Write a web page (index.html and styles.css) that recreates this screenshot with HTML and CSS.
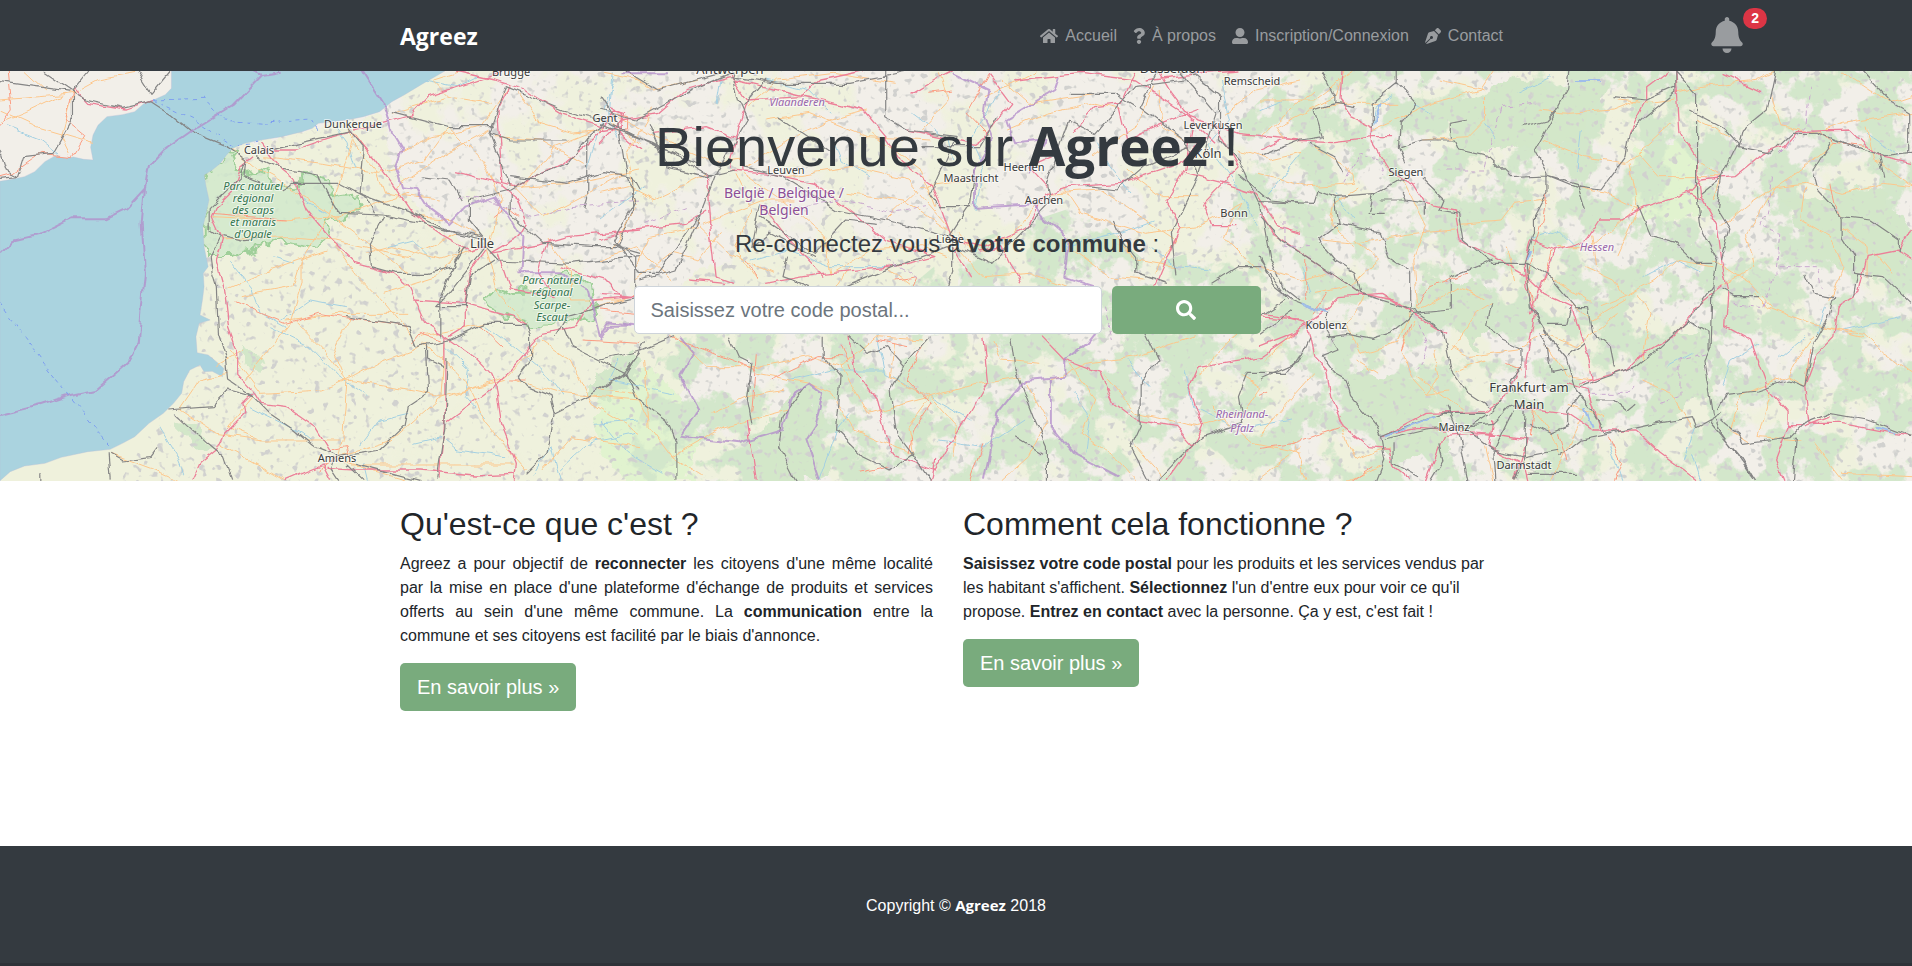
FILE: index.html
```html
<!DOCTYPE html>
<html lang="fr">
<head>
<meta charset="utf-8">
<meta name="viewport" content="width=device-width, initial-scale=1">
<title>Agreez</title>
<link rel="stylesheet" href="styles.css">
</head>
<body>
<header class="topbar">
  <nav class="container topbar-inner">
    <a class="brand" href="#">Agreez</a>
    <ul class="nav-links">
      <li><a href="#"><svg class="icon" width="18" height="16" viewBox="0 0 576 512"><path d="M280.37 148.26L96 300.11V464a16 16 0 0 0 16 16l112.06-.29a16 16 0 0 0 15.92-16V368a16 16 0 0 1 16-16h64a16 16 0 0 1 16 16v95.64a16 16 0 0 0 16 16.05L464 480a16 16 0 0 0 16-16V300L295.67 148.26a12.19 12.19 0 0 0-15.3 0zM571.6 251.47L488 182.56V44.05a12 12 0 0 0-12-12h-56a12 12 0 0 0-12 12v72.61L318.47 43a48 48 0 0 0-61 0L4.34 251.47a12 12 0 0 0-1.6 16.9l25.5 31A12 12 0 0 0 45.15 301l235.22-193.74a12.19 12.19 0 0 1 15.3 0L530.9 301a12 12 0 0 0 16.9-1.6l25.5-31a12 12 0 0 0-1.7-16.93z"/></svg>Accueil</a></li>
      <li><a href="#"><svg class="icon" width="12" height="16" viewBox="0 0 384 512"><path d="M202.021 0C122.202 0 70.503 32.703 29.914 91.026c-7.363 10.58-5.093 25.086 5.178 32.874l43.138 32.709c10.373 7.865 25.132 6.026 33.253-4.148 25.049-31.381 43.63-49.449 82.757-49.449 30.764 0 68.816 19.799 68.816 49.631 0 22.552-18.617 34.134-48.993 51.164-35.423 19.86-82.299 44.576-82.299 106.405V320c0 13.255 10.745 24 24 24h72.471c13.255 0 24-10.745 24-24v-5.773c0-42.86 125.268-44.645 125.268-160.627C377.504 66.256 286.902 0 202.021 0zM192 373.459c-38.196 0-69.271 31.075-69.271 69.271 0 38.195 31.075 69.27 69.271 69.27s69.271-31.075 69.271-69.271-31.075-69.27-69.271-69.27z"/></svg>À propos</a></li>
      <li><a href="#"><svg class="icon" width="16" height="16" viewBox="-32 0 512 512"><path d="M224 288c79.500 0 144-64.500 144-144S303.500 0 224 0 80 64.500 80 144s64.500 144 144 144zm128 32h-55.100c-22.200 10.200-46.900 16-72.900 16s-50.600-5.800-72.900-16H96c-70.700 0-128 57.300-128 128v16c0 26.500 21.500 48 48 48h416c26.500 0 48-21.500 48-48v-16c0-70.700-57.300-128-128-128z"/></svg>Inscription/Connexion</a></li>
      <li><a href="#"><svg class="icon" width="16" height="16" viewBox="0 0 512 512"><path d="M136.6 138.79a64.003 64.003 0 0 0-43.31 41.35L0 460l14.69 14.69L164.8 324.58c-2.99-6.26-4.8-13.18-4.8-20.58 0-26.51 21.49-48 48-48s48 21.49 48 48-21.49 48-48 48c-7.4 0-14.32-1.81-20.58-4.8L37.31 497.31 52 512l279.86-93.29a64.003 64.003 0 0 0 41.35-43.31L416 224 288 96l-151.4 42.79zm361.34-64.62l-60.11-60.11c-18.75-18.75-49.16-18.75-67.91 0l-56.55 56.55 128.02 128.02 56.55-56.55c18.75-18.75 18.75-49.15 0-67.91z"/></svg>Contact</a></li>
    </ul>
  </nav>
  <button class="bell" type="button" aria-label="Notifications">
    <svg class="icon" width="32" height="36" viewBox="0 0 448 512"><path d="M224 512c35.32 0 63.97-28.65 63.97-64H160.03c0 35.35 28.65 64 63.97 64zm215.39-149.71c-19.32-20.76-55.47-51.99-55.47-154.29 0-77.7-54.48-139.9-127.94-155.16V32c0-17.67-14.32-32-31.98-32s-31.98 14.33-31.98 32v20.84C118.56 68.1 64.08 130.3 64.08 208c0 102.3-36.15 133.53-55.47 154.29-6 6.45-8.66 14.16-8.61 21.71.11 16.4 12.98 32 32.1 32h383.8c19.12 0 32-15.6 32.1-32 .05-7.55-2.61-15.27-8.61-21.71z"/></svg>
    <span class="badge">2</span>
  </button>
</header>

<main>
<section class="hero">
<svg class="map" viewBox="0 71 1912 410" preserveAspectRatio="xMidYMid slice" aria-hidden="true">
  <defs>
    <filter id="woods" x="0" y="0" width="100%" height="100%" color-interpolation-filters="sRGB">
      <feTurbulence type="fractalNoise" baseFrequency="0.03" numOctaves="5" seed="8" result="n"/>
      <feColorMatrix in="n" values="0 0 0 0 .828  0 0 0 0 .905  0 0 0 0 .795  14 0 0 0 -6.5"/>
      <feComposite in2="SourceGraphic" operator="in"/>
    </filter>
    <filter id="fields" x="0" y="0" width="100%" height="100%" color-interpolation-filters="sRGB">
      <feTurbulence type="fractalNoise" baseFrequency="0.014" numOctaves="5" seed="21" result="n"/>
      <feColorMatrix in="n" values="0 0 0 0 .937  0 0 0 0 .945  0 0 0 0 .865  0 12 0 0 -5.9"/>
      <feComposite in2="SourceGraphic" operator="in"/>
    </filter>
    <filter id="towns" x="0" y="0" width="100%" height="100%" color-interpolation-filters="sRGB">
      <feTurbulence type="fractalNoise" baseFrequency="0.14" numOctaves="2" seed="4" result="n"/>
      <feColorMatrix in="n" values="0 0 0 0 .82  0 0 0 0 .82  0 0 0 0 .81  0 0 9 0 -5.6"/>
      <feComposite in2="SourceGraphic" operator="in"/>
    </filter>
    <filter id="wiggle" x="0" y="0" width="100%" height="100%" color-interpolation-filters="sRGB">
      <feTurbulence type="fractalNoise" baseFrequency="0.06" numOctaves="2" seed="3" result="n"/>
      <feDisplacementMap in="SourceGraphic" in2="n" scale="8" xChannelSelector="R" yChannelSelector="G"/>
    </filter>
    <filter id="rough" x="-10%" y="-10%" width="120%" height="120%" color-interpolation-filters="sRGB">
      <feTurbulence type="fractalNoise" baseFrequency="0.06" numOctaves="3" seed="5" result="n"/>
      <feDisplacementMap in="SourceGraphic" in2="n" scale="22" xChannelSelector="R" yChannelSelector="G"/>
    </filter>
  </defs>
  <rect y="71" width="1912" height="410" fill="#f2efe9"/>
  <path fill="#eff1dc" filter="url(#rough)" d="M205 150L262 140 380 115 400 190 450 235 520 270 560 320 640 325 700 270 860 240 960 250 960 300 760 330 700 340 680 400 640 500H-20V440L180 340Z"/>
  <g filter="url(#fields)"><rect x="380" y="71" width="1532" height="410"/></g>
  <path fill="#e1f3cf" filter="url(#rough)" d="M600 390L650 365 700 420 690 481 620 481 590 430ZM1630 150L1700 140 1700 215 1640 225Z"/>
  <g filter="url(#woods)"><path d="M660 350L760 300 870 320 960 245 1080 205 1150 265 1230 240 1240 120 1290 71H1912V481H620Z"/></g>
  <path fill="#d3e7c9" filter="url(#rough)" d="M236 350l22 2 6 18-18-2zM592 375l40-26 8 30-30 16-18 6zM178 420l22 8 14 22-14 2-20-20zM1440 110l80-36 40 20-30 50-70 10zM1420 270l70 20-10 60-46-40zM1780 200l100-10 40 50-20 40-80-20zM1340 370l90 10 20 70-60 10zM1640 350l60-20 10 60-50 30zM750 440l60-60 20 90-60 30zM1530 150l20-60 60-10-30 60z"/>
  <g filter="url(#towns)"><path d="M205 150L400 100 470 71H1912V481H120L190 370Z"/></g>
  <path filter="url(#rough)" fill="#cfe8ca" fill-opacity=".8" stroke="#9fcf99" stroke-width="2" d="M205 174L235 150 240 172 262 168 274 172 272 190 296 186 312 170 328 182 330 196 358 192 352 212 332 220 318 244 308 248 274 240 252 250 236 255H206ZM484 300L510 291 545 290 568 273 590 284 596 312 566 325 534 326 510 318 490 308Z"/>
  <g transform="matrix(.40816 0 0 .33333 0 60)">
    <path fill="#aad3df" stroke="#b9bdd6" stroke-width="1" d="M420 33V85L405 104 380 118 355 128 330 155 300 164 262 170 240 196 228 225 222 262 228 300 205 298 180 291 160 295 135 288 110 305 85 335 60 350 30 358 0 364V1262L25 1235 60 1218 110 1210 150 1192 215 1175 270 1168 300 1150 330 1130 365 1090 400 1060 425 1030 445 1000 450 965 465 930 490 915 500 935 520 934 545 950 548 925 530 905 510 885 483 878 480 830 488 790 515 780 490 765 496 720 500 680 498 640 510 620 500 560 497 500 503 470 512 420 505 380 500 345 520 330 540 310 555 285 570 265 600 250 640 240 690 230 740 215 765 205 780 190 850 180 890 170 930 155 960 125 990 105 1040 68 1090 33Z"/>
  </g>
  <g class="lines" fill="none" filter="url(#wiggle)">
    <!-- west -->
    <g transform="matrix(.40816 0 0 .33333 0 60)">
      <path class="river" d="M560 600L620 690 640 760 700 800M690 780L760 720 850 740M660 800L760 860 830 950 900 1010M1090 860L1150 930 1140 1010 1190 1080M1190 800L1260 860 1330 930 1380 1010M610 1040L740 1120 760 1140M880 1160L930 1080 1000 1060M1010 1150L1080 1130 1120 1170 1240 1190M1370 1230L1440 1150 1560 1120M390 1100L430 1180 450 1240M670 590L720 610M820 200L850 250 870 330M1040 60L1120 80 1170 50M890 1210L900 1262M1500 40L1490 160 1460 230 1440 330M950 560L1010 540 1060 600M20 200L100 240 150 290M1450 1090L1568 1080M740 420L800 460M1310 1240L1350 1160 1370 1262"/>
      <path class="road" d="M0 120L100 110 180 100 240 60 330 40M180 100L150 230 170 280M0 190L60 160 180 90M60 33L110 90M570 265L620 320 680 360 830 480 1000 640M650 290L790 310 930 340 1040 300 1100 200M850 200L870 260 920 330 940 400 1080 420M870 220L840 330 810 460 740 600 740 670 710 790 600 960M520 470L690 480 830 470 1000 400M540 540L700 530 820 540 1000 590 1120 520M550 690L640 640 800 570M590 710L720 680 740 600M700 780L830 760 1000 760M810 540L870 640 950 740 1010 830M860 770L820 870 850 960 840 1130 830 1190M560 870L640 1000 790 990 850 960M850 960L940 900 1050 850M850 960L1000 990 1080 1010 1240 960M620 1010L560 1100 640 1140 830 1140M440 1050L530 1120 640 1140M270 1180L380 1230 440 1262M440 1050L490 960 560 940M830 1190L960 1140 1080 1010 1090 850M860 1215H1260M1100 1010L1240 950 1320 850M1260 960L1370 1000 1568 1020M1330 840L1400 900 1450 1030 1568 1120M1200 540L1230 420 1180 300 1100 200M1100 110L1060 60 1130 33M960 160L1100 110 1200 130M970 380L1080 290 1200 210M1250 80L1180 200 1060 230 980 280M1250 380L1400 370 1568 330M1260 380L1330 470 1440 400 1530 340M1340 540L1400 640 1400 720 1530 720M1480 200L1360 260 1280 380M1490 180L1568 250M1420 760L1568 700M1190 540L1110 480 1030 470M1180 560L1080 600 960 560 900 580M1190 560L1220 700 1290 790M1030 830L1190 790M940 700L1070 650 1140 560M1040 850L1140 960 1190 1090 1290 1230M1330 1230L1400 1130 1568 1160M0 150L90 200 230 250M540 1150L700 1262M830 1200L1000 1262M1480 40L1568 60M1270 100L1320 190 1400 220 1480 210M1210 230L1330 240 1430 310M600 870L530 920M720 780L800 880 850 960"/>
      <path class="trunk" d="M0 200L30 150 20 33M180 90L160 180 210 230 180 290 100 280 30 340 0 350M575 725L640 760 700 790 780 760 880 780 1000 800M520 460L700 480M830 1190L780 1230M860 1200L850 1160 810 1170M1250 960L1290 960M1010 850L1030 820 1080 840M870 220L910 290M1210 470L1240 440 1270 470M1500 160L1540 170 1540 210 1500 210M1180 800L1240 870M1430 840L1568 850"/>
      <path class="motorway" d="M180 85L215 130 310 150 375 122M640 250L690 330 720 360 750 450 810 540 870 610 960 640 1000 680 1040 790 1090 830 1160 890 1200 940 1215 980 1230 1100 1265 1210 1260 1262M670 270H720L800 235 860 215 900 270 960 370 1010 460 1080 520 1150 570 1190 560M870 210L940 190 1010 165 1050 110 1150 70 1210 45 1240 33M1115 33L1210 60 1290 90 1380 160 1480 200 1500 150 1530 160 1520 220 1568 270M1250 80L1220 150 1230 380 1270 420 1290 490 1270 530 1200 580M1480 205L1440 250 1380 310 1260 380 1115 335M1200 580L1320 555 1390 530 1568 510M1190 570L1150 640 1140 720 1140 800 1100 830M1220 580L1250 690 1360 710 1320 640 1340 550M1370 620L1480 660 1520 710 1550 710 1450 720 1410 800 1330 820 1250 930 1210 980 1095 1085M1010 720L1140 730 1260 770 1290 790M620 290L590 320 570 390 530 440 520 470 545 540 530 600 550 690 560 800 580 870 580 940 625 1000 640 1030 700 1040 770 1100 810 1180M620 1000L595 1030 600 1060 550 1120 530 1170 490 1210 470 1262M700 1262L790 1215 810 1262M800 1225L870 1230 1030 1230 1160 1245 1260 1240M1090 830L1090 1080 1075 1262"/>
      <path class="rail" d="M0 65L175 95 210 120 300 145 370 125 420 165 470 215 560 260 605 300M175 95L215 33M105 33L180 95 180 170 130 280 60 290 45 350 0 355M335 33L370 100 415 33M0 270L15 330 45 350M605 300L600 350 640 370M630 290L690 325 780 345 800 400 830 460 940 465 1040 490 1120 520 1190 540M690 390L720 370 830 370 900 415 920 460M850 200L890 260 880 400 1000 455 1100 510 1180 530M600 310L590 350 540 410 515 440 515 510 540 530 515 590 520 640 530 680 535 820 555 900 560 960 620 1010 660 1060 720 1110 770 1160 830 1190 930 1170 990 1100 1000 1040 1050 1000 1045 870M545 530L600 545 640 540M940 470L905 550 910 620 970 640 1050 640 1110 620 1130 560M1190 560L1100 700 1070 740 1140 740 1150 650 1210 600M850 770L890 780 1000 800 1020 860 1100 840 1190 790 1290 790 1300 830 1300 900 1270 950 1290 980 1350 1010 1360 1060 1340 1180 1290 1240M1030 350L1100 360 1130 420M1190 540L1150 480 1150 420 1250 390 1290 360 1390 310 1440 230 1480 190M1250 380L1200 220 1240 80 1380 150 1480 180 1568 235M1250 350L1390 370 1480 335 1550 350 1568 390M1250 400L1250 460 1330 550 1460 560 1510 560 1568 580M1190 560L1220 600 1400 610 1568 590M1380 800L1400 860 1530 940 1568 880M1360 1060L1440 1010 1530 940 1568 990M1360 830L1390 770 1500 730 1568 710M1440 230L1440 400 1430 450M1510 560L1550 450 1550 350M1200 220L1250 240 1390 240M960 155L1100 200 1210 200M670 265L780 235 860 215M620 1010L560 990 520 1040 410 1050M430 1060L510 1150 550 1190 570 1262M850 1215L890 1262M870 1210L1030 1262M1095 900L1090 1100 1070 1262M1140 560L1110 620 1080 720 1080 830M270 1180L300 1200 370 1190 385 1165M100 1262V1240M265 1180L270 1262M1050 850L1050 900 1085 920M820 1190L810 1225 830 1262"/>
      <path class="border" d="M620 33L640 45 570 135 470 210 400 270 365 315 355 385 310 445 260 475 175 475 100 520 30 540 0 580M640 45L690 35M355 385L347 490 355 640 340 850 320 900 235 990 175 1005 100 1035 0 1065M890 33L940 130 960 220 985 270 970 320 985 385 1020 390 1045 440 1100 490 1140 440 1215 410 1250 470 1280 530 1275 640 1370 640 1440 690 1470 830 1490 790 1568 800"/>
      <path class="ferry" d="M375 120L500 115 550 180 640 190 760 180 780 215M375 120L480 180 570 255 640 245M0 730L60 830 120 930 270 1160"/>
      <path class="district" d="M1120 410L1200 420 1310 470 1400 440 1568 420"/>
    </g>
    <!-- centre -->
    <g transform="matrix(.44643 0 0 .33333 600 60)">
      <path class="river" d="M30 60L10 150 40 230M270 50L260 130M520 230L540 300 600 350M700 160L780 240 790 300M840 450L860 330 830 240 900 80M620 820L640 940 740 1010 830 1080M340 600L420 570 520 620 640 620M0 480L60 420 100 380M40 900L20 960 170 1000M0 1080L60 1180 140 1240M420 960L520 930 640 930M1390 60L1410 180 1360 260 1440 400 1470 500M1240 480L1160 520 1040 560M1060 1000L1100 1080 1090 1180M760 1140L860 1160 950 1080M490 1262L530 1110 560 1060M1310 930L1330 1040 1440 1110 1550 1080M1110 240L1140 320 1190 400M1180 900L1230 980M370 60L470 90 520 160M1230 560L1290 620 1370 630"/>
      <path class="road" d="M40 170L120 230 260 310 320 300M120 140L60 280 80 440 30 560M330 140L400 60 520 40 660 70M370 180L470 160 600 230 740 240M330 320L420 240 520 180 600 150M320 340L410 420 500 520 520 640M300 340L340 450 300 560 350 660M240 340L120 420 60 380 0 400M220 500L110 530 80 620M210 480L290 580 390 640M230 490L360 420 440 420M420 350L560 320 690 360 780 500M550 400L680 420 790 520M640 480L720 380 830 360M610 220L720 330 750 440M720 210L780 120 760 40M860 110L940 60 980 33M910 210L1000 160 1110 130 1170 150M980 430L920 530 830 570 800 520M800 560L860 650 960 640 1060 690M1000 400L1120 390 1200 460 1290 540 1240 640M1040 380L1080 460 1220 520 1340 500 1440 430M1100 290L1200 200 1240 80M1320 250L1260 200 1250 90M1180 330L1260 410 1340 410M1430 270L1500 300 1568 280M1400 160L1470 90 1568 60M170 830L240 920 350 920 470 890 540 920M250 1060L330 1010 410 990M100 900L110 1100 160 1190 230 1250M0 990L80 1000 110 1080M160 1190L280 1100 420 1050M350 940L470 970 520 1000 570 1110 700 1180M540 920L620 830 720 840M540 920L600 1060 740 1010 850 970 940 950M740 1010L690 1100 700 1180M660 850L650 950 740 1010M1010 960L1090 910 1200 890 1330 830M1050 910L1110 1020 1080 1120 1160 1200 1200 1262M950 960L1000 1080 960 1190 900 1262M1130 950L1200 1060 1340 1100 1440 1060 1480 980 1440 950M1340 950L1420 830 1480 760M0 600L80 560 160 660M80 660L160 580 220 600 270 520M520 640L600 570 720 560 780 590M640 620L690 670M1050 560L1140 650 1220 660M1160 530L1200 600 1290 620M900 60L960 130 1110 100M60 33L120 90 220 60M1440 430L1400 530 1480 640M1370 1040L1460 1150 1568 1180M1200 1160L1260 1250M740 1010L800 1100 790 1190M880 840L900 900 990 910M520 700L560 620"/>
      <path class="trunk" d="M330 600L350 660M350 880L340 1060M160 830L350 930M380 960L490 890H540M540 860L560 930M660 660L710 650 690 720M690 860L620 840M720 860L690 960 740 1030 700 1110 690 1180M0 750L80 760M740 100L790 90M860 1150L830 1262M580 1240L650 1220M870 40L820 160 870 230"/>
      <path class="motorway" d="M0 210L50 200 50 160 20 140M0 250L50 180 130 160 190 90 290 50M290 40L330 120 310 200 290 320M300 60L400 90 590 150 640 230 680 310 740 370 760 430 790 540M590 33L490 60 450 110 330 120M290 330L380 340 480 370 570 460 640 540 750 590 660 620 500 640 370 670M120 220L240 200 320 240 320 330M240 340L250 520 260 650 300 670M0 540L60 510 190 490 240 450M360 430L430 550 500 650M790 33L750 60 700 100M790 540L860 560 960 500 1000 400 1050 380 1170 370 1300 310 1360 230M790 560L830 650M850 570L900 560 940 670M870 40L920 130 860 230 840 250 690 210M930 60L1080 40 1200 60 1300 150 1380 250M1010 290L960 320 1000 380M1160 130L1180 240 1260 190 1340 150M1060 220L1110 140 1170 130 1200 33M1250 33L1280 100 1320 170 1430 220 1568 240M1330 180L1310 330 1270 420 1300 500 1240 690M1380 200L1430 320 1350 430 1370 500 1430 500M1310 340L1400 370 1470 400 1520 500 1568 520M1220 60L1350 40 1430 33M560 830L570 930 620 1020 650 1180 750 1230 870 960 860 830M740 1262L750 1200M990 830L1040 900 1120 940 1150 1030 1200 1080 1290 1100 1330 1160 1350 1100 1320 980 1340 920 1480 890 1568 810M1330 1150L1270 1262M1470 770L1568 780M0 700L80 710M280 670L200 660M330 1080L350 1262"/>
      <path class="rail" d="M0 190L120 250 250 350M20 190L130 260 220 310M0 150L80 180 190 100 290 40M60 33L130 90 270 40M295 33L310 120 330 180 260 340 220 480 170 630 90 660M290 50L400 70 560 70 700 33M370 60L320 140M400 170L520 280M640 33L640 170 690 210 800 230 780 280 740 400 760 440 830 440M320 320L410 350 530 450 640 480 780 530 830 430 840 330M300 330L240 350 150 320 110 190M30 540L80 420 60 350 40 190 0 110M30 540L90 640H130L230 450M30 550L80 590 80 680M360 470L480 580 550 480 620 490M790 540L790 640 780 680M800 560L880 610 960 500 1010 430 1000 370 1050 180M780 560L660 620 550 680M420 590L410 650 470 680M360 430L340 560 380 520 480 590M890 170L850 260 720 260M1050 180L1110 220 1200 80 1310 60M1050 100H1150L1200 140M1250 33L1210 140 1310 240 1340 350 1280 520 1290 640M1300 33L1380 160 1360 240 1340 340M1320 33L1390 110V240L1430 300 1480 440 1500 590 1530 680 1568 720M1430 340L1500 420 1568 430M1090 380L1160 390 1220 320 1320 260M1150 480L1170 540 1200 590 1200 640 1270 670M100 850L60 940 80 1010 150 1080 170 1150 170 1262M170 830L100 870 0 900M0 990L60 940M290 830L310 890 340 910 330 1020 340 1090M500 830L500 890 540 950 530 1110 590 1190 650 1230M560 830L600 880 640 860 680 920 650 990 660 1110 700 1180 740 1262M680 920L740 830M460 980L410 1070 400 1160 430 1240 440 1262M700 1180L650 1230M920 830L930 930 970 1070 1000 1160 1000 1262M1220 820L1250 900 1210 970 1210 1100 1190 1160 1230 1262M1250 1262L1300 1190 1350 1130 1440 1090 1430 1010 1450 940 1540 940 1568 890M1370 670L1430 620 1480 620M930 1130L990 1180"/>
      <path class="border" d="M50 40L150 40M790 40L870 90 860 170 880 240 840 330 840 440 970 430 990 470 1050 540 1040 650 1110 680M910 180L1020 90 1030 50M910 180L930 250 1000 240 960 340M0 840L20 800 70 800M180 830L210 880 180 950 220 1050 180 1130 310 1150 410 1110 430 1010 470 970 500 1000 480 1100 460 1140 490 1262M1120 800L1090 850 1040 900 1040 950 950 960 890 1060 860 1262M1010 960L1010 1100 1060 1180 1160 1250"/>
      <path class="district" d="M100 490L200 440M440 440L540 420 660 460 730 440M640 600L720 660M1130 740L1150 840"/>
    </g>
    <!-- east -->
    <g transform="matrix(.41582 0 0 .33333 1260 60)">
      <path class="river" d="M320 110L280 140 270 200M370 130L410 160M540 190L570 240M770 210L760 330M100 620L120 700M230 480L180 400M650 540L720 510 760 560M920 650L1000 600 1060 640M1110 980L1130 900 1200 850M1250 890L1310 830M1400 810L1540 770M1040 1180L1060 1262M840 1150L870 1262M0 150L60 120M20 400L90 290M1460 220L1540 290M620 100L700 50M1360 740L1340 820M1040 880L980 920M1050 1100L1020 1200"/>
      <path class="road" d="M0 120L130 120 220 33M0 230L130 90M60 240L40 200 180 110 200 33M130 260L210 320 230 370 120 380 0 340M340 170L410 130 530 90 560 33M270 210L360 160M390 240L500 230 540 180 540 90 430 60M120 150L200 130 330 130M230 560L170 490 180 430 240 380M230 540L290 600 220 680 130 700M150 540L230 550 370 520 470 510M340 350L400 500 370 600 380 750 480 680 540 720M480 490L580 480 610 430 690 420M670 150L740 160 850 150 910 120M680 240L780 290 880 310 910 280 990 190M860 120L940 130 1000 120M910 280L960 350 1050 350 1110 350M910 450L830 400 760 380M890 310L910 450 860 590M720 560L800 560 900 450M780 620L850 660 880 710 820 740M880 710L950 660 1000 600 1090 620M880 720L800 780 740 720M800 530L810 620M910 700L940 760 920 900M700 650L800 730M920 960L990 1000 1040 1100M860 760L760 860 680 820M680 820L620 870 500 890 460 860M460 870L520 760 560 730M240 880L330 850 360 760M240 880L210 800 250 710M370 780L340 870 370 960 400 1000 460 990M400 1000L430 950 420 870M230 900L280 940M0 620L100 660 160 640M10 900L80 820M0 1130L80 1010 130 940M80 1140L110 1262M200 1110L230 1200 310 1160M210 1262L290 1220M1000 100L1060 80 1200 60 1240 33M1230 110L1250 200 1340 220 1400 190 1568 160M1400 33L1520 130 1568 110M1050 180L1130 230M1060 310L1110 350 1090 420M1380 250L1300 330 1240 380 1180 430 1110 500M1240 380L1310 370 1400 400 1500 370 1568 380M1240 380L1170 520 1190 620 1110 680M1310 380L1300 480 1370 530 1400 620 1370 720M1190 700L1220 740 1320 790 1450 830M1090 600L1180 670 1230 740M1350 800L1450 820 1500 880 1568 940M1330 830L1290 900 1270 950M1270 950L1160 1000 1130 1110 1180 1150M1270 950L1310 980M1230 990L1200 1130 1300 1140M1400 1240L1568 1250M1400 1262L1330 1150M1400 500L1460 560 1460 650M1480 580L1520 640M540 1160L560 1262M490 1050L380 950M690 860L740 950 800 960M640 1020L700 1120 720 1180M780 1060L700 1262M610 660L590 560M1460 200L1480 300 1568 380M0 1250L100 1160M830 1070L740 1030M470 930L540 900"/>
      <path class="trunk" d="M110 720L110 600M380 740L410 680 500 640M160 700L130 760M360 790L340 870M690 400L680 480 660 560 640 650 660 740M700 570L680 670M0 1165L80 1150 150 1120 200 1100M650 1130L660 1050M1370 370L1380 430 1400 470M1350 220L1380 250 1460 260M840 1130L870 1210 850 1262M720 1120L740 1200M590 910L630 930M0 1000L20 990M1320 870L1310 980M220 1262L270 1220"/>
      <path class="motorway" d="M195 33L190 120 220 170 270 200 270 250 310 330 370 370 400 430 470 450 480 540 560 590 630 640 680 700 750 740 770 820 790 890 800 970M0 270L60 240 180 245 270 230 320 230M980 33L930 80 930 120 890 220M1000 33L1010 220 1050 300 1060 410 1100 500 1110 600 1125 700 1120 800 1180 840 1220 980 1270 1050 1270 1100 1240 1200 1260 1262M1110 40L1205 95M770 970L880 930 920 880 1000 820 1050 740 1110 680M1030 400L930 440 870 480H820L790 540 710 570 650 540 635 610 640 680 660 760 650 840 640 900 640 950M710 570L670 690 650 760M1030 400L1060 360 1140 350 1210 280 1260 260 1290 215 1420 210 1460 260 1490 290 1568 310M1030 400L1060 420M0 460L30 520 170 640 240 700 320 720 370 760 450 820M0 860L80 820 150 760 190 710 290 700 370 760M0 760L60 770 110 790 120 830 130 890 160 930 170 1010 200 1100 260 1160 310 1165 320 1220 360 1262M295 1130L400 1060 540 1055 590 1010 620 930M290 1130L380 1105 560 1120M400 1262L440 1130 540 1120 640 1140 610 1262M620 1040L740 1060 800 1110 900 1110 960 1180 1050 1262M560 1080L550 1160 630 1210 640 1262M740 970L790 990 820 1110M1568 500L1540 570 1460 590 1440 700 1390 740 1380 830 1340 880 1310 980 1320 1090 1400 1090 1568 1130M1530 570L1568 600M1270 1100L1310 1100 1370 1070"/>
      <path class="rail" d="M150 33L180 110 180 130 230 140M330 33V70L375 130 340 190 335 260 350 310M330 70L270 130 270 200M130 150L180 130M130 150L150 230 100 240 0 290M120 250L180 290 200 340M745 33L740 90 700 180 660 270 690 340 690 400 660 470 660 520 635 610M340 260L390 240 470 240 480 270 550 290 600 350 690 345 760 380 820 390 850 340 880 290 890 220 930 170 1000 100 1000 33M1000 33L1050 100V400L1060 500 1100 600 1090 660 1085 860 1070 900 1090 1060 1110 1120 1190 1262M1030 150L1120 210 1150 250 1110 350 1060 400M1240 33L1220 150 1160 210 1150 260 1230 280 1280 220 1340 220 1400 250 1500 290 1568 280M1110 350L1100 450 1130 510 1110 600M690 345L760 370 780 450M0 425L130 430 140 390 180 410 280 400 350 350M180 410L190 490 140 540 180 600 230 640 240 700M180 490L290 520 310 590 360 630 360 760M270 400L260 460 300 460M340 390L350 420 290 420M350 420L400 430 400 470M390 360L440 420 430 450 480 460 490 540 560 610 640 610M0 470L50 540 160 630 240 700 370 750 440 810 460 930 500 1000 550 1040M370 760L460 750 460 650 560 600M370 760L310 820 270 835 210 820 160 830M0 590L30 670 80 720 160 760 160 810 190 870 150 890 180 940 210 960 220 1010 280 1100 290 1130 300 1200 280 1262M0 600L70 720M80 750L0 820M120 830L90 910 0 960M640 610L650 740 700 840 740 900 760 990 800 1050 830 1120 940 1090 1040 1070 1050 1100 1110 1060M640 610L700 650 760 740 790 740M750 740L740 790 690 790M660 750L690 830M770 980L900 920 960 860 1030 780 1090 680M740 890L780 850M790 740L800 820 840 860 850 920M560 730L550 790 580 840 630 870 630 920 600 960 610 1000M740 930L700 940 690 850 670 820M910 440L940 530 1000 550 1050 610 1090 610M630 200L690 180 720 140M460 190L500 180M460 190L460 230M1340 380L1330 330 1370 250M1340 390L1400 470 1400 530 1430 590 1430 640 1500 650 1568 730M1400 470L1470 480 1540 540 1540 580M1310 650L1330 700 1380 710 1370 760 1330 850 1310 980M1430 710L1440 640M1110 690L1140 710H1200M1030 780L1080 820 1080 870M1100 1050L1120 1000 1200 990 1270 960 1310 980M1110 1080L1150 1120 1160 1150 1280 1130 1310 1090 1370 1060 1460 1080 1568 1130M1290 1130L1280 1262M1080 1080L1160 1200 1190 1262M290 1130L440 1060 540 1060M300 1140L400 1110 560 1090 600 1040 640 1030M500 1110L560 1170 640 1190 720 1170M610 1050L560 1180 565 1262M640 1050L635 1190 610 1262M770 1000L740 1050 740 1100 700 1120 650 1090M720 1190L770 1140 850 1120M500 1100L550 1060 580 1020M450 1040L480 1130 500 1262M320 1150V1210L380 1250M430 1150L440 1200 410 1262M0 770L60 720M810 1020L850 1020 880 1050 900 1030M1490 290L1500 350M1450 33L1520 130 1560 160 1560 280M850 110L930 120 1000 80M640 1240L760 1240"/>
      <path class="district" d="M60 480L60 560 120 560M200 370L240 280 290 300 300 350M450 330L540 330 580 140 660 130M1320 80L1310 200 1250 280M1230 350L1220 460 1200 500 1250 520 1240 650 1210 740 1130 730M1250 620L1340 620 1350 680M800 1000L890 1000 900 980M960 1030L1010 1010 1010 900 1080 880M380 790L400 860 380 930"/>
      <path class="deep" d="M760 60L820 60M290 130L275 190M300 1130L420 1070M100 730L160 760M650 570L640 600M780 1040L800 1100M1480 1100L1530 1120"/>
    </g>
  </g>
  <g class="place">
    <text x="511" y="76">Brugge</text><text x="353" y="128">Dunkerque</text><text x="259" y="154">Calais</text><text x="605" y="122">Gent</text><text x="337" y="462">Amiens</text>
    <text x="786" y="174">Leuven</text><text x="971" y="182">Maastricht</text><text x="1024" y="171">Heerlen</text><text x="1044" y="204">Aachen</text><text x="950" y="243">Liège</text><text x="1252" y="85">Remscheid</text><text x="1213" y="129">Leverkusen</text><text x="1234" y="217">Bonn</text>
    <text x="1406" y="176">Siegen</text><text x="1326" y="329">Koblenz</text><text x="1454" y="431">Mainz</text><text x="1524" y="469">Darmstadt</text>
  </g>
  <g class="place city">
    <text x="482" y="248">Lille</text><text x="730" y="74">Antwerpen</text><text x="1173" y="73">Düsseldorf</text><text x="1208" y="158">Köln</text><text x="1529" y="392">Frankfurt am</text><text x="1529" y="409">Main</text>
  </g>
  <g class="place country"><text x="784" y="198">België / Belgique /</text><text x="784" y="215">Belgien</text></g>
  <g class="place region"><text x="797" y="106">Vlaanderen</text><text x="919" y="334">Wallonie</text><text x="1242" y="418">Rheinland-</text><text x="1242" y="432">Pfalz</text><text x="1597" y="251">Hessen</text></g>
  <g class="place park"><text x="253" y="190">Parc naturel</text><text x="253" y="202">régional</text><text x="253" y="214">des caps</text><text x="253" y="226">et marais</text><text x="253" y="238">d'Opale</text><text x="552" y="284">Parc naturel</text><text x="552" y="296">régional</text><text x="552" y="309">Scarpe-</text><text x="552" y="321">Escaut</text></g>
</svg>
<div class="container hero-content">
  <h1>Bienvenue sur <strong class="name">Agreez</strong> !</h1>
  <h2 class="tagline">Re-connectez vous à <strong>votre commune</strong> :</h2>
  <form class="search">
    <input type="text" placeholder="Saisissez votre code postal..." aria-label="Code postal">
    <button type="submit" aria-label="Rechercher"><svg class="icon" width="20" height="20" viewBox="0 0 512 512"><path d="M505 442.7L405.3 343c-4.5-4.5-10.6-7-17-7H372c27.6-35.3 44-79.7 44-128C416 93.1 322.9 0 208 0S0 93.1 0 208s93.1 208 208 208c48.3 0 92.7-16.4 128-44v16.3c0 6.4 2.5 12.5 7 17l99.7 99.7c9.4 9.4 24.6 9.4 33.9 0l28.3-28.3c9.4-9.4 9.4-24.6.1-34zM208 336c-70.7 0-128-57.2-128-128 0-70.7 57.2-128 128-128 70.7 0 128 57.2 128 128 0 70.7-57.2 128-128 128z"/></svg></button>
  </form>
</div>
</section>

<section class="container about">
  <article>
    <h2>Qu'est-ce que c'est ?</h2>
    <p class="justified">Agreez a pour objectif de <strong>reconnecter</strong> les citoyens d'une même localité par la mise en place d'une plateforme d'échange de produits et services offerts au sein d'une même commune. La <strong>communication</strong> entre la commune et ses citoyens est facilité par le biais d'annonce.</p>
    <a class="more" href="#">En savoir plus »</a>
  </article>
  <article>
    <h2>Comment cela fonctionne ?</h2>
    <p><strong>Saisissez votre code postal</strong> pour les produits et les services vendus par les habitant s'affichent. <strong>Sélectionnez</strong> l'un d'entre eux pour voir ce qu'il propose. <strong>Entrez en contact</strong> avec la personne. Ça y est, c'est fait !</p>
    <a class="more" href="#">En savoir plus »</a>
  </article>
</section>
</main>

<footer class="footer"><p>Copyright © <strong class="name">Agreez</strong> 2018</p></footer>
</body>
</html>
```
FILE: styles.css
```css
* { box-sizing: border-box; }

body {
  margin: 0;
  min-height: 100vh;
  display: flex;
  flex-direction: column;
  font: 16px/24px "Liberation Sans", Arial, sans-serif;
  color: #212529;
  background: #fff;
}

h1, h2, p, ul { margin: 0; padding: 0; }
h1, h2 { font-weight: 400; }
a { text-decoration: none; }
main { flex: 1; }

.container {
  width: 100%;
  max-width: 1140px;
  margin: 0 auto;
  padding: 0 15px 0 14px;
}

.icon { display: block; fill: currentColor; flex: none; }
.name { font-family: "Open Sans", sans-serif; font-weight: 700; line-height: 1; }

/* Top bar */
.topbar {
  display: grid;
  grid-template-columns: minmax(0, 1fr) minmax(0, 1140px) minmax(0, 1fr);
  height: 71px;
  background: #343a40;
}
.topbar-inner {
  grid-column: 2;
  display: flex;
  align-items: center;
  justify-content: space-between;
}
.brand { font: 700 23px/32px "Open Sans", sans-serif; color: #fff; }
.nav-links { display: flex; list-style: none; }
.nav-links a {
  display: flex;
  align-items: center;
  gap: 7px;
  padding: 8px;
  color: #999c9f;
}
.bell {
  justify-self: end;
  display: flex;
  align-items: flex-start;
  margin-right: 145px;
  padding: 8px 0;
  border: 0;
  background: none;
  color: #999c9f;
}
.bell .icon { margin-top: 9px; }
.badge {
  padding: 0 8px;
  border-radius: 11px;
  background: #dc3545;
  color: #fff;
  font: 700 14px/21px "Liberation Sans", Arial, sans-serif;
}

/* Hero */
.hero { position: relative; overflow: hidden; color: #343a40; text-align: center; }
.map { position: absolute; inset: 0; width: 100%; height: 100%; }
.hero-content { position: relative; padding: 42px 32px 147px 14px; }
.hero h1 { font-size: 56px; line-height: 68px; }
.hero .name { font-size: 53px; }
.tagline { margin-top: 48px; font-size: 24px; line-height: 29px; }
.search {
  display: grid;
  grid-template-columns: 468fr 149fr;
  gap: 10px;
  max-width: 627px;
  margin: 28px auto 0;
}
.search input {
  min-width: 0;
  height: 48px;
  padding: 8px 16px;
  border: 1px solid #ced4da;
  border-radius: 5px;
  background: #fff;
  font: 20px/30px "Liberation Sans", Arial, sans-serif;
}
.search input::placeholder { color: #6c757d; opacity: 1; }
.search button {
  display: grid;
  place-items: center;
  border: 0;
  border-radius: 5px;
  background: #79ab7d;
  color: #fff;
}

/* Map drawing */
.lines path { vector-effect: non-scaling-stroke; stroke-linejoin: round; }
.river { stroke: #a4d0e2; stroke-width: 1; }
.road { stroke: #fdc78c; stroke-width: 1; }
.trunk { stroke: #fb9c82; stroke-width: 1; }
.motorway { stroke: #ec7f98; stroke-width: 1.3; }
.rail { stroke: #858585; stroke-width: 1.2; }
.border { stroke: #b18bc9; stroke-width: 2; stroke-opacity: .75; }
.ferry { stroke: #7d9df0; stroke-width: 1; stroke-dasharray: 4 4; }
.district { stroke: #c9a9cf; stroke-width: 1; stroke-dasharray: 5 3; }
.deep { stroke: #9fbdea; stroke-width: 2; }
.place {
  font: 11px "Noto Sans", sans-serif;
  fill: #3b3b3b;
  stroke: #fff;
  stroke-opacity: .6;
  stroke-width: 2px;
  paint-order: stroke;
  text-anchor: middle;
}
.city { font-size: 13px; }
.country { font-size: 14px; fill: #8b4f96; }
.region { font-style: italic; fill: #9866ab; }
.park { font-style: italic; fill: #33754f; }

/* About */
.about {
  display: grid;
  grid-template-columns: repeat(auto-fit, minmax(320px, 1fr));
  gap: 30px;
  padding: 24px 30px 48px 14px;
}
.about h2 { margin-bottom: 8px; font-size: 32px; line-height: 39px; }
.about p { margin-bottom: 15px; }
.justified { text-align: justify; }
.more {
  display: inline-block;
  padding: 9px 17px;
  border-radius: 5px;
  background: #79ab7d;
  color: #fff;
  font-size: 20px;
  line-height: 30px;
}

/* Footer */
.footer {
  padding: 48px 15px 45px;
  border-bottom: 3px solid #2e3238;
  background: #343a40;
  color: #fff;
  text-align: center;
}
.footer .name { font-size: 15px; }
```
